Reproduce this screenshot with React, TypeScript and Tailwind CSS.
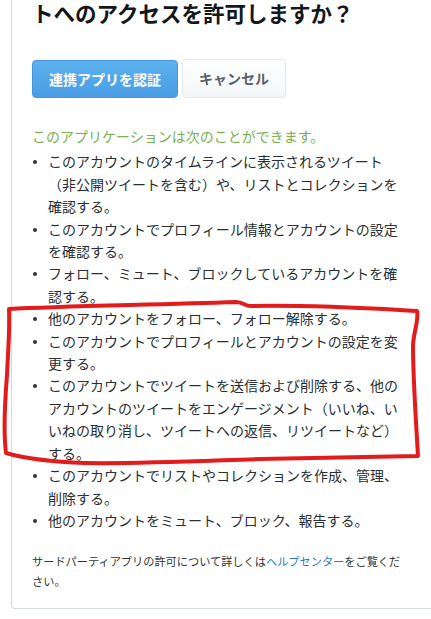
const PERMISSIONS: string[][] = [
  [
    'このアカウントのタイムラインに表示されるツイート',
    '（非公開ツイートを含む）や、リストとコレクションを',
    '確認する。',
  ],
  ['このアカウントでプロフィール情報とアカウントの設定', 'を確認する。'],
  ['フォロー、ミュート、ブロックしているアカウントを確', '認する。'],
  ['他のアカウントをフォロー、フォロー解除する。'],
  ['このアカウントでプロフィールとアカウントの設定を変', '更する。'],
  [
    'このアカウントでツイートを送信および削除する、他の',
    'アカウントのツイートをエンゲージメント（いいね、い',
    'いねの取り消し、ツイートへの返信、リツイートなど）',
    'する。',
  ],
  ['このアカウントでリストやコレクションを作成、管理、', '削除する。'],
  ['他のアカウントをミュート、ブロック、報告する。'],
];

export default function App() {
  return (
    <div className="relative w-[431px] h-[619px] overflow-hidden bg-white font-['Noto_Sans_CJK_JP','Noto_Sans',sans-serif] text-[#292f33]">
      {/* Card */}
      <div className="ml-[11px] w-[460px] border-l border-b border-[#d3dce2] rounded-bl-[4px] pl-[20px] pb-[17px]">
        <h1 className="text-[21.5px] leading-[26px] font-bold text-[#14171a] whitespace-nowrap">
          トへのアクセスを許可しますか？
        </h1>

        {/* Buttons */}
        <div className="mt-[34px] flex gap-[4px]">
          <button className="h-[38px] w-[146px] rounded-[4px] border border-[#4196dc] bg-linear-to-b from-[#5cb1ef] to-[#4a9de3] text-[14px] font-bold text-white">
            連携アプリを認証
          </button>
          <button className="h-[39px] w-[104px] -mt-[1px] rounded-[4px] border border-[#e1e8ed] bg-linear-to-b from-white to-[#f3f6f8] text-[14px] font-bold text-[#57606a]">
            キャンセル
          </button>
        </div>

        <p className="mt-[27px] text-[14px] leading-[22.4px] text-[#79b04f]">
          このアプリケーションは次のことができます。
        </p>

        <ul className="mt-[3px] text-[14px] leading-[22.4px]">
          {PERMISSIONS.map((lines, i) => (
            <li key={i} className="flex">
              <span className="w-[16px] shrink-0 pt-[10px] pl-[1px]">
                <span className="block w-[4px] h-[4px] rounded-full bg-[#333]" />
              </span>
              <span className="whitespace-nowrap">
                {lines.map((line, j) => (
                  <span key={j} className="block">
                    {line}
                  </span>
                ))}
              </span>
            </li>
          ))}
        </ul>

        <p className="mt-[20px] text-[11.2px] leading-[20px] text-[#333]">
          サードパーティアプリの許可について詳しくは
          <a href="#" className="text-[#2b7bb9]">
            ヘルプセンター
          </a>
          をご覧くだ
          <br />
          さい。
        </p>
      </div>

      {/* Red hand-drawn annotation */}
      <svg
        className="absolute inset-0 pointer-events-none"
        width="431"
        height="619"
        viewBox="0 0 431 619"
      >
        <path
          d="M9 309 C 60 306, 150 305, 236 302 C 244 302, 245 307, 252 306 C 320 305, 380 309, 417 311 C 419 320, 414 330, 413 345 C 413 380, 416 420, 418 456 C 380 457, 320 458, 260 459 C 200 461, 140 464, 85 463 C 55 462, 30 460, 6 453 C 3 430, 5 400, 7 375 C 8 350, 10 330, 9 309"
          fill="none"
          stroke="#e31b1b"
          strokeWidth="4"
          strokeLinecap="round"
          strokeLinejoin="round"
        />
      </svg>
    </div>
  );
}
